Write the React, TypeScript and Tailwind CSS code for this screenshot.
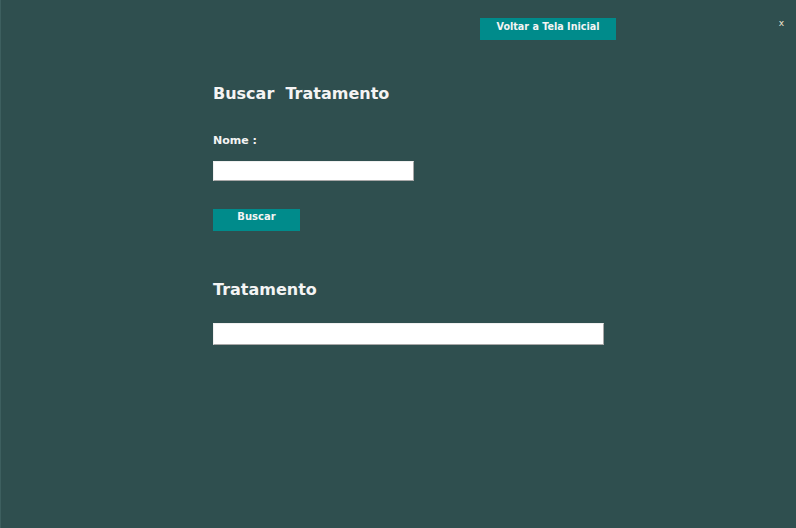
import { useState } from "react";

const font = { fontFamily: '"DejaVu Sans", "Liberation Sans", sans-serif' };

export default function App() {
  const [nome, setNome] = useState("");

  return (
    <div
      style={font}
      className="flex h-[528px] w-[796px] flex-col border-l border-[#3d5f5f] bg-[#2f4f4f] font-bold text-[#f4f4f4]"
    >
      {/* Top bar */}
      <div className="flex items-start pl-[479px] pr-[12px] pt-[18px]">
        <button className="flex h-[22px] w-[136px] items-start justify-center bg-[#008b8b] pt-[4px] text-[9.6px] font-bold leading-none text-[#f4f4f4]">
          Voltar a Tela Inicial
        </button>
        <span className="ml-auto mt-[1px] text-[9px] font-normal leading-none text-[#f0e6d0]">x</span>
      </div>

      {/* Form */}
      <div className="flex flex-col items-start pl-[212px]">
        <h1 className="mt-[44px] whitespace-pre text-[16px] leading-[20px]">Buscar  Tratamento</h1>

        <label className="mt-[30px] text-[11px] leading-[14px]">Nome :</label>

        <input
          value={nome}
          onChange={(e) => setNome(e.target.value)}
          className="mt-[13px] h-[20px] w-[201px] border border-[#f0f0f0] border-b-[#a8a8a8] border-r-[#a8a8a8] bg-white px-1 text-[12px] font-normal text-black outline-none"
        />

        <button className="mt-[28px] flex h-[22px] w-[87px] items-start justify-center bg-[#008b8b] pt-[3px] text-[10px] font-bold leading-none text-[#f4f4f4]">
          Buscar
        </button>

        <h2 className="mt-[49px] text-[16px] leading-[20px]">Tratamento</h2>

        <input
          readOnly
          className="mt-[23px] h-[22px] w-[391px] border border-[#f0f0f0] border-b-[#a8a8a8] border-r-[#a8a8a8] bg-white px-1 text-[12px] font-normal text-black outline-none"
        />
      </div>
    </div>
  );
}
